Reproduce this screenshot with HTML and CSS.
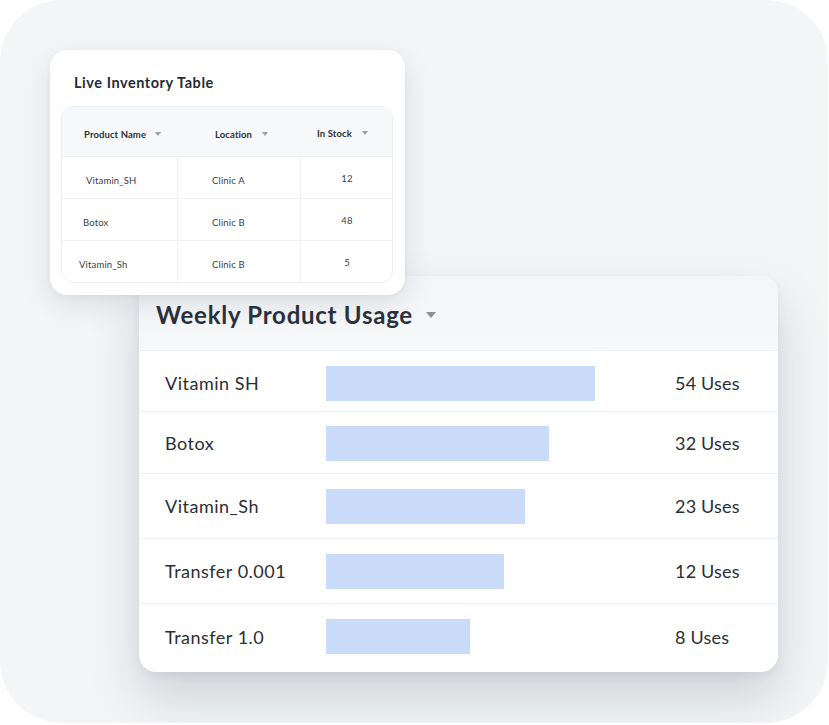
FILE: index.html
```html
<!DOCTYPE html>
<html lang="en">
<head>
<meta charset="utf-8">
<link rel="stylesheet" href="styles.css">
</head>
<body>
<div class="panel">
  <section class="inv-card">
    <h2 class="inv-title">Live Inventory Table</h2>
    <div class="inv-table">
      <div class="inv-head">
        <div class="th th-1">Product Name <span class="tri"></span></div>
        <div class="th th-2">Location <span class="tri"></span></div>
        <div class="th th-3">In Stock <span class="tri"></span></div>
      </div>
      <div class="inv-row">
        <div class="td c1 p1">Vitamin_SH</div>
        <div class="td c2">Clinic A</div>
        <div class="td c3">12</div>
      </div>
      <div class="inv-row">
        <div class="td c1 p2">Botox</div>
        <div class="td c2">Clinic B</div>
        <div class="td c3">48</div>
      </div>
      <div class="inv-row last">
        <div class="td c1 p3">Vitamin_Sh</div>
        <div class="td c2">Clinic B</div>
        <div class="td c3">5</div>
      </div>
    </div>
  </section>

  <section class="usage-card">
    <header class="usage-head">
      <h1 class="usage-title">Weekly Product Usage</h1>
      <span class="tri tri-lg"></span>
    </header>
    <div class="usage-row r1">
      <span class="u-label">Vitamin SH</span>
      <span class="u-track"><span class="u-bar" style="width:269px"></span></span>
      <span class="u-val">54 Uses</span>
    </div>
    <div class="usage-row r2">
      <span class="u-label">Botox</span>
      <span class="u-track"><span class="u-bar" style="width:223px"></span></span>
      <span class="u-val">32 Uses</span>
    </div>
    <div class="usage-row r3">
      <span class="u-label">Vitamin_Sh</span>
      <span class="u-track"><span class="u-bar" style="width:199px"></span></span>
      <span class="u-val">23 Uses</span>
    </div>
    <div class="usage-row r4">
      <span class="u-label">Transfer 0.001</span>
      <span class="u-track"><span class="u-bar" style="width:178px"></span></span>
      <span class="u-val">12 Uses</span>
    </div>
    <div class="usage-row r5">
      <span class="u-label">Transfer 1.0</span>
      <span class="u-track"><span class="u-bar" style="width:144px"></span></span>
      <span class="u-val">8 Uses</span>
    </div>
  </section>
</div>
</body>
</html>
```

FILE: styles.css
```css
* { box-sizing: border-box; margin: 0; padding: 0; }
html, body { background: #ffffff; }
body {
  font-family: "Lato", "Noto Sans", sans-serif;
  color: #2b2f36;
}
.panel {
  width: 828px;
  height: 723px;
  background: #f3f5f7;
  border-radius: 62px;
  padding: 50px 0 0 50px;
  overflow: hidden;
}

/* inventory card */
.inv-card {
  position: relative;
  z-index: 2;
  width: 355px;
  height: 245px;
  background: #ffffff;
  border-radius: 17px;
  padding: 22px 13px 0 11px;
  box-shadow: 0 10px 30px rgba(20, 30, 50, 0.10), 0 2px 6px rgba(20,30,50,0.04);
}
.inv-title {
  font-size: 14.5px;
  font-weight: 700;
  color: #262c36;
  padding-left: 13px;
  height: 21px;
  line-height: 21px;
  letter-spacing: 0.55px;
}
.inv-table {
  margin-top: 13px;
  border: 1px solid #eceff3;
  border-radius: 12px;
  overflow: hidden;
  width: 332px;
}
.inv-head {
  display: grid;
  grid-template-columns: 116px 123px 1fr;
  height: 50px;
  background: #f7f8fa;
  border-bottom: 1px solid #eceff3;
  align-items: center;
  padding-top: 5px;
}
.th {
  font-size: 9.5px;
  font-weight: 700;
  color: #2c3038;
  display: flex;
  align-items: center;
  letter-spacing: 0.1px;
}
.th-1 { padding-left: 22px; }
.th-1 .tri { margin-left: 9px; }
.th-2 { padding-left: 37px; }
.th-2 .tri { margin-left: 10px; }
.th-3 { padding-left: 16px; margin-top: -2px; }
.th-3 .tri { margin-left: 10px; }
.tri {
  display: inline-block;
  width: 0;
  height: 0;
  border-left: 3.5px solid transparent;
  border-right: 3.5px solid transparent;
  border-top: 4px solid #9a9ea5;
}
.inv-row {
  display: grid;
  grid-template-columns: 116px 123px 1fr;
  height: 42px;
  border-bottom: 1px solid #eef0f3;
}
.inv-row.last { border-bottom: none; height: 41px; }
.td {
  font-size: 9.5px;
  color: #3a3e45;
  display: flex;
  align-items: center;
  padding-top: 5px;
  letter-spacing: 0.15px;
}
.c1 { border-right: 1px solid #eceff3; }
.c2 { border-right: 1px solid #eceff3; padding-left: 34px; }
.c3 { justify-content: center; padding-left: 1px; padding-top: 1px; }
.p1 { padding-left: 24px; }
.p2 { padding-left: 21px; }
.p3 { padding-left: 17px; }

/* usage card */
.usage-card {
  position: relative;
  z-index: 1;
  width: 639px;
  margin: -19px 0 0 89px;
  background: #ffffff;
  border-radius: 17px;
  overflow: hidden;
  box-shadow: 0 26px 50px rgba(30, 40, 60, 0.17), 0 4px 10px rgba(30,40,60,0.06);
}
.usage-head {
  height: 75px;
  background: linear-gradient(180deg, #f3f5f7 0%, #f7f8fa 100%);
  border-bottom: 1px solid #eceff3;
  display: flex;
  align-items: center;
  padding: 2px 0 0 17px;
}
.usage-title {
  font-size: 24px;
  font-weight: 700;
  color: #2b323d;
  letter-spacing: 0.75px;
}
.tri-lg {
  margin-left: 13px;
  border-left-width: 5px;
  border-right-width: 5px;
  border-top-width: 6px;
  border-top-color: #8c9097;
  margin-top: 2px;
}
.usage-row {
  display: flex;
  align-items: center;
  height: 62px;
  border-bottom: 1px solid #eef0f3;
  padding-left: 26px;
}
.usage-row.r1 { height: 61px; padding-top: 4px; }
.usage-row.r2 { padding-top: 1px; }
.usage-row.r3, .usage-row.r4 { height: 65px; }
.usage-row.r5 { height: 68px; border-bottom: none; padding-bottom: 3px; }
.u-label {
  width: 161px;
  font-size: 18px;
  color: #2b2e34;
  letter-spacing: 0.5px;
}
.u-track {
  width: 349px;
  display: flex;
}
.u-bar {
  display: block;
  height: 35px;
  background: #cadbf9;
}
.u-val {
  font-size: 18px;
  color: #2b2e34;
  letter-spacing: 0.2px;
}
```
